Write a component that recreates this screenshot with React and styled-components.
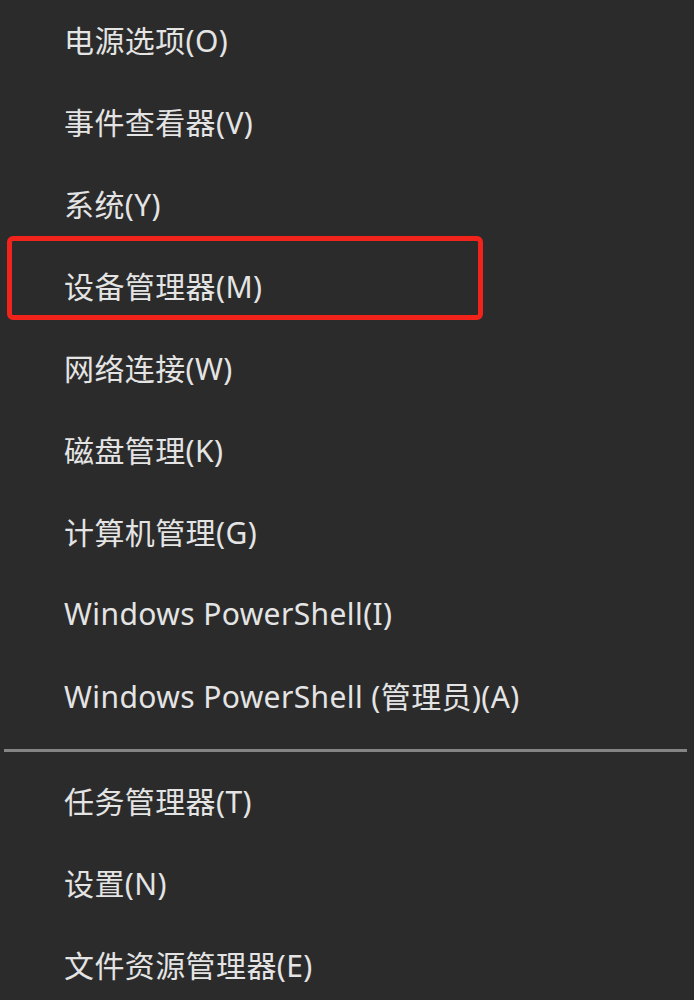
import React from 'react';
import styled, { createGlobalStyle } from 'styled-components';

const GlobalStyle = createGlobalStyle`
    html, body {
        margin:0;
        padding:0;
        background:#2b2b2b;
    }
`

const Menu = styled.div`
    width:694px;
    height:1000px;
    overflow:hidden;
    background:#2b2b2b;
    display:flex;
    flex-direction:column;
    font-family:"Noto Sans", "Noto Sans CJK SC", sans-serif;
`

const Item = styled.div`
    position:relative;
    height:82px;
    box-sizing:border-box;
    padding-bottom:4px;
    flex-shrink:0;
    display:flex;
    align-items:center;
    padding-left:64px;
    font-size:30px;
    letter-spacing:0.4px;
    color:#e4e4e4;
`

const Highlight = styled.div`
    position:absolute;
    left:7px;
    top:-10px;
    width:476px;
    bottom:8px;
    box-sizing:border-box;
    border:5px solid #f2231a;
    border-radius:6px;
`

const Separator = styled.div`
    flex-shrink:0;
    height:23px;
    display:flex;
    align-items:center;
    padding:0 7px 0 4px;

    &::before {
        content:"";
        flex:1;
        height:3px;
        margin-top:1px;
        background:#858585;
    }
`

const topItems = [
    "电源选项(O)",
    "事件查看器(V)",
    "系统(Y)",
    "设备管理器(M)",
    "网络连接(W)",
    "磁盘管理(K)",
    "计算机管理(G)",
    "Windows PowerShell(I)",
    "Windows PowerShell (管理员)(A)",
]

const bottomItems = [
    "任务管理器(T)",
    "设置(N)",
    "文件资源管理器(E)",
]

const App = () => (
    <>
        <GlobalStyle />
        <Menu>
            {topItems.map(text => (
                <Item key={text}>
                    {text === "设备管理器(M)" && <Highlight />}
                    {text}
                </Item>
            ))}
            <Separator />
            {bottomItems.map(text => (
                <Item key={text}>{text}</Item>
            ))}
        </Menu>
    </>
)

export default App;
